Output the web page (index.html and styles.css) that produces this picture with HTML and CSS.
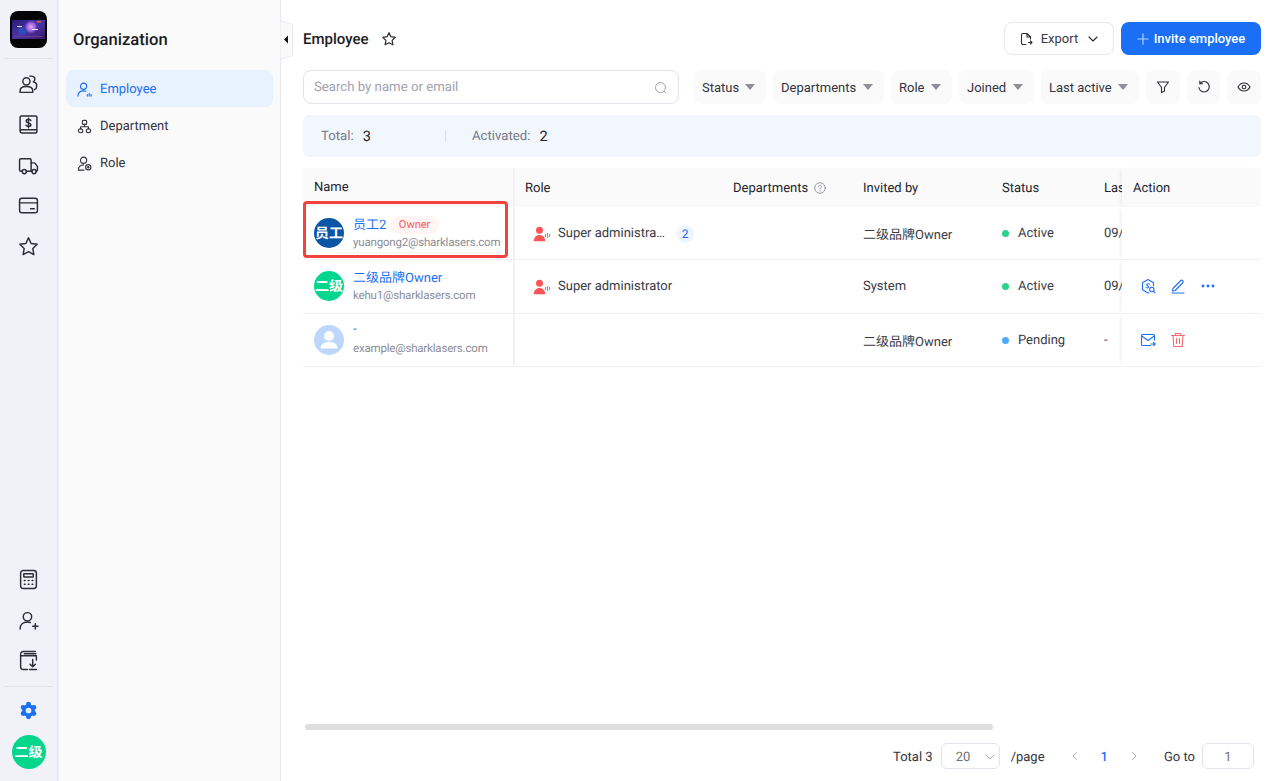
FILE: index.html
```html
<!DOCTYPE html>
<html lang="en">
<head>
<meta charset="utf-8">
<title>Employee</title>
<link rel="stylesheet" href="styles.css">
</head>
<body>
<div class="app">
  <aside class="rail">
    <div class="logo">
      <svg viewBox="0 0 37 37" width="37" height="37">
        <defs>
          <linearGradient id="lg" x1="0" y1="0" x2="1" y2="1"><stop offset="0" stop-color="#2a1c78"/><stop offset="0.5" stop-color="#4a35a8"/><stop offset="1" stop-color="#3a1760"/></linearGradient>
          <radialGradient id="rg"><stop offset="0" stop-color="#e6a8ee"/><stop offset="0.6" stop-color="#9a62dc"/><stop offset="1" stop-color="#6a3bc0" stop-opacity="0"/></radialGradient>
        </defs>
        <rect width="37" height="37" rx="8" fill="#050505"/>
        <rect x="2" y="9" width="33" height="19" fill="url(#lg)"/>
        <circle cx="21" cy="16" r="7" fill="url(#rg)"/>
        <circle cx="12" cy="20" r="3.500" fill="#2a50b8"/>
        <rect x="27" y="10" width="4" height="1.500" fill="#d8603c"/>
        <rect x="7" y="15" width="5" height="1" fill="#e6e6f5"/>
        <rect x="22" y="18" width="6" height="1" fill="#e6e6f5"/>
        <rect x="4" y="25" width="28" height="1" fill="#6a3a98"/>
      </svg>
    </div>
    <div class="rail-rule"></div>
    <a class="rail-item"><svg viewBox="0 0 20 20" class="ri"><circle cx="8" cy="7" r="3.400"/><path d="M2 17.500v-1.700c0-2.300 2.200-4 6-4s6 1.700 6 4v1.700z"/><path d="M11.500 2.200c2.400-.6 4.600.5 4.600 2.600 0 1.200-.6 2-1.500 2.600 2.200.5 3.400 2.200 3.200 4.500-.1 1.400-.9 2.500-2.200 3"/></svg></a>
    <a class="rail-item"><svg viewBox="0 0 20 20" class="ri"><path d="M2 16.500V3a1 1 0 0 1 1-1h14a1 1 0 0 1 1 1v14a1 1 0 0 1-1 1H3.500A1.500 1.500 0 0 1 2 16.500a1.500 1.500 0 0 1 1.500-1.500H18"/><path d="M12.200 6.200c-.5-.8-1.200-1.100-2.200-1.100-1.300 0-2.200.6-2.200 1.700 0 2.400 4.500 1 4.500 3.400 0 1.100-1 1.700-2.300 1.700-1.100 0-1.900-.4-2.400-1.200M10 4v9"/></svg></a>
    <a class="rail-item"><svg viewBox="0 0 20 20" class="ri"><path d="M4 15.500H2.800A1.300 1.300 0 0 1 1.500 14.200V4.800A1.300 1.300 0 0 1 2.800 3.500h8.400a1.300 1.300 0 0 1 1.300 1.300v10.700H8"/><path d="M12.500 7.500h2.800c.4 0 .8.200 1 .5l2 2.600c.1.200.2.400.2.600v3c0 .7-.6 1.300-1.300 1.300H17M12.500 15.500h1"/><circle cx="6" cy="15.800" r="2"/><circle cx="15.300" cy="15.800" r="2"/></svg></a>
    <a class="rail-item"><svg viewBox="0 0 20 20" class="ri"><rect x="1.500" y="3" width="17" height="14" rx="2.200"/><path d="M1.500 7.500h17M12 13h3.500"/></svg></a>
    <a class="rail-item"><svg viewBox="0 0 20 20" class="ri"><path d="M10 1.800l2.500 5.300 5.800.8-4.200 4 1 5.800-5.100-2.800-5.100 2.800 1-5.800-4.200-4 5.800-.8z"/></svg></a>
    <div class="rail-spacer"></div>
    <a class="rail-item"><svg viewBox="0 0 20 20" class="ri"><rect x="2.500" y="1.500" width="15" height="17" rx="2.500"/><rect x="5.500" y="4.500" width="9" height="3.200" rx=".5"/><path d="M6 11h.8M9.700 11h.8M13.400 11h.8M6 14.500h.8M9.700 14.500h.8M13.400 14.500h.8"/></svg></a>
    <a class="rail-item"><svg viewBox="0 0 20 20" class="ri"><circle cx="9" cy="6.500" r="4"/><path d="M2 18c0-4 3-6.500 7-6.500 1 0 2 .2 2.800.5M14 15.500h5M16.500 13v5"/></svg></a>
    <a class="rail-item"><svg viewBox="0 0 20 20" class="ri"><path d="M9 18.500H5A2.500 2.500 0 0 1 2.500 16V4A2.500 2.500 0 0 1 5 1.500h11.500M2.800 5.500h14.700v4M6 3.500h11M14 9v7M11.500 13.500L14 16l2.500-2.500M11 18.500h6.500"/></svg></a>
    <div class="rail-rule rail-rule-low"></div>
    <a class="rail-item rail-gear"><svg viewBox="0 0 20 20" width="19" height="19"><g fill="#1a6ff5"><circle cx="10" cy="10" r="6.600"/><circle cx="10" cy="3.500" r="2.600"/><circle cx="10" cy="16.500" r="2.600"/><circle cx="4.400" cy="6.750" r="2.600"/><circle cx="15.600" cy="6.750" r="2.600"/><circle cx="4.400" cy="13.250" r="2.600"/><circle cx="15.600" cy="13.250" r="2.600"/></g><circle cx="10" cy="10" r="3" fill="#e8edfb"/></svg></a>
    <div class="avatar avatar-green avatar-rail">二级</div>
  </aside>

  <nav class="panel">
    <h1 class="panel-title">Organization</h1>
    <a class="nav-item is-active">
      <svg viewBox="0 0 16 16" class="ni"><circle cx="7" cy="4.500" r="3.300"/><path d="M1 15c0-3.500 2.500-5.500 6-5.500 1 0 1.800.1 2.500.4M11 15v-1.500M13 15v-3M15 15v-2"/></svg>
      <span>Employee</span>
    </a>
    <a class="nav-item">
      <svg viewBox="0 0 16 16" class="ni"><rect x="5.700" y="1.500" width="4.600" height="4.200" rx="1"/><rect x="1.500" y="10.500" width="4.600" height="4.200" rx="2.100"/><rect x="9.900" y="10.500" width="4.600" height="4.200" rx="2.100"/><path d="M8 5.700v2.500M3.800 10.500V8.200h8.400v2.300"/></svg>
      <span>Department</span>
    </a>
    <a class="nav-item">
      <svg viewBox="0 0 16 16" class="ni"><circle cx="7" cy="4.500" r="3.300"/><path d="M1.500 15c-.3-3 2-5.500 5.500-5.500M1.500 15h6"/><circle cx="12" cy="12" r="2.800"/><circle cx="12" cy="12" r=".7"/></svg>
      <span>Role</span>
    </a>
    <svg class="collapse" viewBox="0 0 13 40" width="13" height="40"><path d="M0 .5l12.500 4v31L0 39.500z" fill="#fafafa" stroke="#e8e9ef"/><path d="M8 15.500v8l-4-4z" fill="#111"/></svg>
  </nav>

  <main class="main">
    <header class="topbar">
      <div class="heading">
        <h2>Employee</h2>
        <svg viewBox="0 0 16 16" width="16" height="16" class="star"><path d="M8 1.700l1.900 4 4.400.6-3.200 3.100.8 4.400L8 11.700l-3.900 2.100.8-4.400L1.700 6.300l4.400-.6z"/></svg>
      </div>
      <div class="actions">
        <button class="btn btn-plain">
          <svg viewBox="0 0 14 14" width="14" height="14" class="line"><path d="M7 12.500H4A1.500 1.500 0 0 1 2.500 11V3A1.500 1.500 0 0 1 4 1.500h4l3.500 3.500v2M8 1.500V5h3.500M9.500 10.500h3.500M11.500 9l1.500 1.500L11.500 12"/></svg>
          <span>Export</span>
          <svg viewBox="0 0 12 12" width="12" height="12" class="line chev"><path d="M2 4l4 4 4-4"/></svg>
        </button>
        <button class="btn btn-primary">
          <svg viewBox="0 0 14 14" width="12" height="12" class="plus"><path d="M7 1v12M1 7h12"/></svg>
          <span>Invite employee</span>
        </button>
      </div>
    </header>

    <div class="toolbar">
      <div class="search">
        <span>Search by name or email</span>
        <svg viewBox="0 0 14 14" width="14" height="14" class="search-ic"><circle cx="6.500" cy="6.500" r="5"/><path d="M10.300 10.300l1.700 1.700"/></svg>
      </div>
      <button class="pill w-status">Status<i class="caret"></i></button>
      <button class="pill w-dept">Departments<i class="caret"></i></button>
      <button class="pill w-role">Role<i class="caret"></i></button>
      <button class="pill w-joined">Joined<i class="caret"></i></button>
      <button class="pill w-last">Last active<i class="caret"></i></button>
      <button class="pill pill-icon"><svg viewBox="0 0 14 14" width="14" height="14" class="line"><path d="M1.500 2h11L8.500 7.500V11l-3 1.500v-5z"/></svg></button>
      <button class="pill pill-icon"><svg viewBox="0 0 14 14" width="14" height="14" class="line"><path d="M3 3.500A5.200 5.200 0 1 1 1.900 7.500M2.800 1v2.800h2.800"/></svg></button>
      <button class="pill pill-icon"><svg viewBox="0 0 14 14" width="14" height="14" class="line"><path d="M1 7c1.500-2.800 3.500-4 6-4s4.500 1.200 6 4c-1.500 2.800-3.500 4-6 4s-4.500-1.200-6-4z"/><circle cx="7" cy="7" r="1.800"/></svg></button>
    </div>

    <section class="stats">
      <div class="stat stat-total"><span class="stat-label">Total:</span><span class="stat-value">3</span></div>
      <i class="stat-rule"></i>
      <div class="stat"><span class="stat-label">Activated:</span><span class="stat-value">2</span></div>
    </section>

    <div class="table">
      <div class="cell th c-name">Name</div>
      <div class="cell th c-role">Role</div>
      <div class="cell th th-dept">Departments<svg viewBox="0 0 12 12" width="12" height="12" class="help"><circle cx="6" cy="6" r="5.300"/><path d="M4.500 4.700c0-.9.700-1.400 1.500-1.400s1.500.5 1.500 1.300c0 1.200-1.500 1.200-1.500 2.300M6 8.500v.6"/></svg></div>
      <div class="cell th">Invited by</div>
      <div class="cell th">Status</div>
      <div class="cell th clip">Last active</div>
      <div class="cell th c-action">Action</div>

      <div class="cell c-name">
        <div class="avatar avatar-navy">员工</div>
        <div class="who">
          <div class="who-top"><span class="who-name">员工2</span><span class="tag">Owner</span></div>
          <div class="who-mail">yuangong2@sharklasers.com</div>
        </div>
        <div class="callout"></div>
      </div>
      <div class="cell c-role">
        <svg viewBox="0 0 18 16" width="18" height="16" class="role-ic"><use href="#roleicon"/></svg>
        <span class="role-text role-short">Super administra…</span><span class="count">2</span>
      </div>
      <div class="cell"></div>
      <div class="cell">二级品牌Owner</div>
      <div class="cell"><i class="dot dot-green"></i>Active</div>
      <div class="cell clip">09/12/2024</div>
      <div class="cell c-action"></div>

      <div class="cell c-name">
        <div class="avatar avatar-green">二级</div>
        <div class="who">
          <div class="who-top"><span class="who-name">二级品牌Owner</span></div>
          <div class="who-mail">kehu1@sharklasers.com</div>
        </div>
      </div>
      <div class="cell c-role">
        <svg viewBox="0 0 18 16" width="18" height="16" class="role-ic"><use href="#roleicon"/></svg>
        <span class="role-text">Super administrator</span>
      </div>
      <div class="cell"></div>
      <div class="cell">System</div>
      <div class="cell"><i class="dot dot-green"></i>Active</div>
      <div class="cell clip">09/12/2024</div>
      <div class="cell c-action">
        <svg viewBox="0 0 16 16" width="16" height="16" class="act act-blue"><path d="M9 14.800l-1 .2-5.500-3.200V4.700L8 1.500l5.500 3.200v3"/><path d="M9.300 6.200C8.800 5.700 7 5.500 6.700 6.700c-.3 1.300 2.300 1.200 2 2.500-.3 1-1.800.9-2.500.4"/><circle cx="11.800" cy="11.500" r="2.200"/><path d="M13.400 13.200l1.600 1.600"/></svg>
        <svg viewBox="0 0 16 16" width="16" height="16" class="act act-blue"><path d="M3 10.500L10.800 2.500a1.500 1.500 0 0 1 2.200 2L5.200 12.500 2.500 13z"/><path d="M2 15h12"/></svg>
        <svg viewBox="0 0 16 16" width="16" height="16" class="act act-more"><circle cx="3" cy="8" r="1.400"/><circle cx="8" cy="8" r="1.400"/><circle cx="13" cy="8" r="1.400"/></svg>
      </div>

      <div class="cell c-name">
        <div class="avatar avatar-pale"><svg viewBox="0 0 30 30" width="30" height="30"><circle cx="15" cy="11" r="5" fill="#fff"/><path d="M6.500 23.500c0-4.500 3.500-6.500 8.500-6.500s8.500 2 8.500 6.500z" fill="#fff"/></svg></div>
        <div class="who">
          <div class="who-top"><span class="who-name">-</span></div>
          <div class="who-mail">example@sharklasers.com</div>
        </div>
      </div>
      <div class="cell c-role"></div>
      <div class="cell"></div>
      <div class="cell">二级品牌Owner</div>
      <div class="cell"><i class="dot dot-blue"></i>Pending</div>
      <div class="cell clip">-</div>
      <div class="cell c-action">
        <svg viewBox="0 0 16 16" width="16" height="16" class="act act-blue"><path d="M14.500 8V3.500a1 1 0 0 0-1-1h-11a1 1 0 0 0-1 1v9a1 1 0 0 0 1 1h8"/><path d="M1.800 4L8 8.500 14.200 4M11 12h4M13.500 10.300L15.200 12l-1.700 1.700"/></svg>
        <svg viewBox="0 0 16 16" width="16" height="16" class="act act-red"><path d="M1.500 3.500h13M5.500 3.500V1.500h5v2M3 3.500l.8 11h8.400l.8-11M6.500 6.500v5M9.500 6.500v5"/></svg>
      </div>
    </div>

    <div class="fill"></div>
    <div class="scrollbar"><i class="thumb"></i></div>

    <footer class="pager">
      <span class="pager-text">Total 3</span>
      <div class="select"><span>20</span><svg viewBox="0 0 12 12" width="12" height="12" class="pager-ic"><path d="M2 4l4 4 4-4"/></svg></div>
      <span class="pager-text per">/page</span>
      <svg viewBox="0 0 12 12" width="12" height="12" class="pager-ic prev"><path d="M7.500 2.500L4 6l3.500 3.500"/></svg>
      <span class="pager-text current">1</span>
      <svg viewBox="0 0 12 12" width="12" height="12" class="pager-ic next"><path d="M4.500 2.500L8 6l-3.500 3.500"/></svg>
      <span class="pager-text goto">Go to</span>
      <div class="goto-box">1</div>
    </footer>
  </main>
</div>
<svg width="0" height="0" class="defs">
  <symbol id="roleicon" viewBox="0 0 18 16">
    <circle cx="6.500" cy="4.300" r="3.500" fill="#fb5555"/>
    <path d="M.8 15.200c0-3.800 2.400-6.200 5.700-6.200s5.700 2.400 5.700 6.200z" fill="#fb5555"/>
    <path d="M12.500 8v3M14.500 7v5M16.500 8v3" stroke="#fb6b6b" stroke-width="1.100" fill="none"/>
  </symbol>
</svg>
</body>
</html>
```

FILE: styles.css
```css
* { box-sizing: border-box; }
html, body { margin: 0; height: 100%; }
body {
  font-family: Roboto, "Noto Sans CJK SC", sans-serif;
  font-size: 13px;
  color: #3a3b45;
  background: #fff;
  overflow: hidden;
  text-rendering: geometricPrecision;
}
h1, h2 { margin: 0; }
button { font: inherit; color: inherit; cursor: pointer; }
.defs { position: absolute; }

.app { display: flex; height: 781px; }

/* icon rail */
.rail {
  width: 59px;
  flex: none;
  display: flex;
  flex-direction: column;
  align-items: center;
  padding: 11px 0 12px;
  background: #f1f2f7;
  border-right: 2px solid #e9eaf0;
}
.logo { width: 37px; height: 37px; flex: none; margin-right: 1px; }
.logo svg { display: block; }
.rail-rule { width: 49px; height: 1px; flex: none; background: #e2e3e9; margin: 10px 0 5px; }
.rail-rule-low { margin: 5px 0 3px; }
.rail-item { height: 40.5px; flex: none; display: flex; align-items: center; justify-content: center; width: 100%; }
.rail-spacer { flex: 1; }
.ri { width: 21px; height: 21px; fill: none; stroke: #2c2d35; stroke-width: 1.400; stroke-linecap: round; stroke-linejoin: round; }
.rail-gear { height: 40px; margin-bottom: 5px; }

/* secondary nav */
.panel {
  position: relative;
  width: 222px;
  flex: none;
  padding: 0 7px;
  background: #fafafa;
  border-right: 1px solid #e8e9ef;
}
.panel-title { font-size: 16.600px; font-weight: 500; line-height: 22px; color: #1c1d24; padding: 30px 0 18px 7px; }
.nav-item { display: flex; align-items: center; gap: 8px; height: 37px; padding: 2px 0 0 11px; border-radius: 8px; font-size: 13px; color: #33343d; }
.nav-item.is-active { background: #e8f1fe; color: #1a6ff5; }
.ni { width: 15px; height: 15px; flex: none; fill: none; stroke: currentColor; stroke-width: 1.200; stroke-linecap: round; stroke-linejoin: round; }
.collapse { position: absolute; left: 221px; top: 20px; }

/* main */
.main { flex: 1; min-width: 0; display: flex; flex-direction: column; padding: 0 19px 0 22px; }
.topbar { display: flex; justify-content: space-between; align-items: center; height: 70px; padding-top: 8px; padding-bottom: 1px; }
.heading { display: flex; align-items: center; gap: 12px; }
.heading h2 { font-size: 15px; font-weight: 500; color: #1c1d24; }
.star { fill: none; stroke: #2c2d35; stroke-width: 1.200; stroke-linejoin: round; }
.actions { display: flex; gap: 7px; }
.btn { height: 33px; border-radius: 8px; display: flex; align-items: center; font-size: 13px; }
.btn-plain { width: 110px; justify-content: center; gap: 8px; background: #fff; border: 1px solid #e6e7ee; }
.chev { margin-left: 1px; }
.btn-primary { width: 140px; justify-content: center; gap: 5px; background: #1a6ff5; border: 0; color: #fff; font-weight: 500; }
.line { fill: none; stroke: #2c2d35; stroke-width: 1.100; stroke-linecap: round; stroke-linejoin: round; }
.plus { fill: none; stroke: #b9d3fb; stroke-width: 1.300; stroke-linecap: round; }

.toolbar { display: flex; gap: 7px; height: 34px; }
.search {
  width: 376px;
  flex: none;
  margin-right: 8px;
  display: flex;
  align-items: center;
  justify-content: space-between;
  padding: 1px 10px 0 10px;
  border: 1px solid #e2e3ec;
  border-radius: 8px;
  font-size: 13.200px;
  color: #a0a2ac;
}
.search-ic { fill: none; stroke: #a0a2ac; stroke-width: 1; stroke-linecap: round; }
.pill { height: 34px; border: 0; border-radius: 8px; background: #fafafa; display: flex; align-items: center; justify-content: space-between; padding: 0 11px 0 8px; font-size: 13px; color: #33343d; }
.w-status { width: 72px; }
.w-dept { width: 111px; }
.w-role { width: 61px; }
.w-joined { width: 75px; }
.w-last { width: 98px; }
.pill-icon { flex: 1; justify-content: center; padding: 0; }
.caret { width: 0; height: 0; border: 5.500px solid transparent; border-top: 6px solid #8d8f99; border-bottom: 0; }

.stats { display: flex; align-items: center; height: 42px; margin-top: 11px; background: #f2f6fd; border-radius: 6px; padding-left: 18px; }
.stat { display: flex; align-items: center; gap: 9px; }
.stat-total { width: 124px; }
.stat-label { color: #777985; font-size: 13.200px; }
.stat-value { color: #22232b; font-size: 14.500px; }
.stat-rule { width: 1px; height: 12px; background: #dcdfe8; margin-right: 26px; }

/* table */
.table {
  display: grid;
  grid-template-columns: 212px 207px 130px 139px 102px 29px 139px;
  grid-template-rows: 39px 53.300px 53.300px 53.300px;
  margin-top: 11px;
  flex: none;
}
.cell { display: flex; align-items: center; min-width: 0; padding-left: 11px; padding-top: 1px; border-bottom: 1px solid #f1f2f6; font-size: 13px; color: #3a3b45; white-space: nowrap; }
.th { background: #fafafa; border-bottom: 0; padding-top: 2px; color: #24252d; }
.th-dept { gap: 6px; padding-top: 1px; }
.help { fill: none; stroke: #8d8f99; stroke-width: .9; stroke-linecap: round; }
.clip { overflow: hidden; padding-right: 0; }
.c-name { position: relative; border-right: 2px solid #f1f2f6; gap: 9px; padding-top: 0; }
.c-role { padding-left: 10px; }
.c-action { gap: 14px; padding-left: 18px; padding-top: 0; box-shadow: -3px 0 4px -2px rgba(0, 0, 0, 0.07); background: #fff; z-index: 1; }
.th.c-action { background: #fafafa; padding-left: 11px; padding-top: 2px; }

.avatar { flex: none; width: 30px; height: 30px; border-radius: 50%; display: flex; align-items: center; justify-content: center; color: #fff; font-size: 14px; font-weight: 700; overflow: hidden; }
.avatar-navy { background: #0a55a5; }
.avatar-green { background: #05d68e; }
.avatar-pale { background: #bcd7fb; }
.avatar-rail { width: 34px; height: 34px; font-size: 14px; flex: none; }
.who { min-width: 0; display: flex; flex-direction: column; gap: 1.500px; margin-bottom: 2px; }
.who-top { display: flex; align-items: center; gap: 4px; height: 18px; }
.who-name { color: #1a6ff5; font-size: 13px; }
.who-mail { color: #8a8c96; font-size: 11.500px; letter-spacing: -0.18px; line-height: 16px; }
.tag { margin-top: 3px; padding: 0 8.500px; height: 18px; line-height: 18px; border-radius: 9px; background: #fff5f5; color: #fb5b5b; font-size: 11px; }
.callout { position: absolute; left: 0; top: -6px; width: 205px; height: 57px; border: 3px solid #f4423f; border-radius: 4px; z-index: 2; }

.role-ic { flex: none; margin: 0 7px 0 8px; }
.role-text { color: #3a3b45; }
.role-short { width: 107px; flex: none; }
.count { width: 18px; height: 18px; margin-left: 11px; border-radius: 50%; background: #eef5fe; color: #1a6ff5; font-size: 12px; display: flex; align-items: center; justify-content: center; flex: none; }
.dot { width: 7px; height: 7px; border-radius: 50%; margin-right: 9px; flex: none; }
.dot-green { background: #2fcf8f; }
.dot-blue { background: #4fa9ff; }
.act { flex: none; fill: none; stroke-width: 1.100; stroke-linecap: round; stroke-linejoin: round; }
.act-blue { stroke: #1a6ff5; }
.act-red { stroke: #fb6b6b; }
.act-more { fill: #1a6ff5; stroke: none; }

/* footer */
.fill { flex: 1; }
.scrollbar { height: 6px; padding-left: 2px; margin-bottom: 13px; }
.thumb { display: block; width: 688px; height: 6px; border-radius: 3px; background: #dfdfdf; }
.pager { display: flex; align-items: center; justify-content: flex-end; height: 26px; margin-bottom: 12px; padding-right: 7px; font-size: 13px; color: #33343d; }
.pager-text { padding-top: 2px; }
.select { width: 59px; height: 26px; margin-left: 8px; display: flex; align-items: center; justify-content: space-between; padding: 2px 3px 0 14px; border: 1px solid #e2e3ec; border-radius: 6px; color: #6d6f7a; }
.per { margin-left: 11px; }
.pager-ic { fill: none; stroke: #a8aab3; stroke-width: 1; stroke-linecap: round; stroke-linejoin: round; }
.prev { margin-left: 24px; }
.current { margin-left: 20px; color: #1a6ff5; font-weight: 500; }
.next { margin-left: 20px; }
.goto { margin-left: 24px; }
.goto-box { width: 52px; height: 26px; margin-left: 7px; padding-top: 2px; display: flex; align-items: center; justify-content: center; border: 1px solid #e2e3ec; border-radius: 6px; color: #6d6f7a; }
```
